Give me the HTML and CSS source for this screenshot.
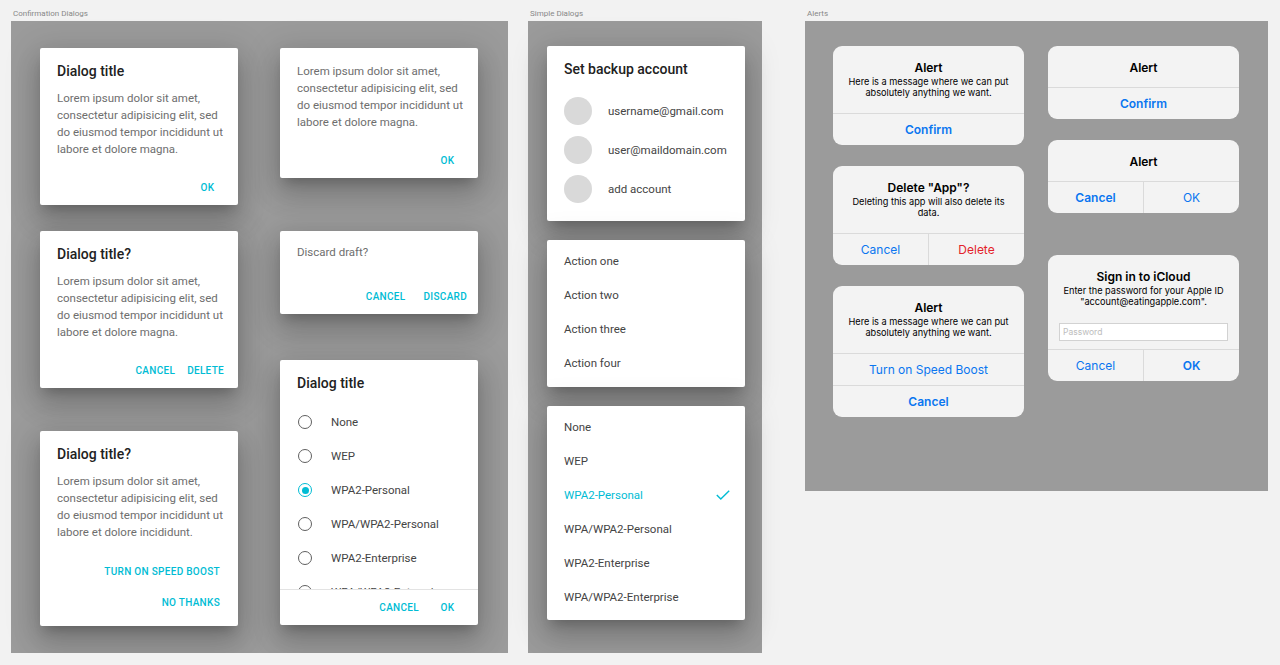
FILE: index.html
```html
<!DOCTYPE html>
<html lang="en">
<head>
<meta charset="UTF-8">
<meta name="viewport" content="width=device-width, initial-scale=1.0">
<title>Dialogs</title>
<link rel="stylesheet" href="styles.css">
</head>
<body>
<div class="board">

    <section class="artboard artboard-confirm">
        <div class="artboard-label">Confirmation Dialogs</div>
        <div class="canvas canvas-confirm">
            <div class="col">
                <div class="md-dialog">
                    <div class="md-title">Dialog title</div>
                    <div class="md-body">Lorem ipsum dolor sit amet, consectetur adipisicing elit, sed do eiusmod tempor incididunt ut labore et dolore magna.</div>
                    <div class="md-actions"><span class="md-btn">OK</span></div>
                </div>
                <div class="md-dialog dlg-delete">
                    <div class="md-title">Dialog title?</div>
                    <div class="md-body">Lorem ipsum dolor sit amet, consectetur adipisicing elit, sed do eiusmod tempor incididunt ut labore et dolore magna.</div>
                    <div class="md-actions"><span class="md-btn">Cancel</span><span class="md-btn">Delete</span></div>
                </div>
                <div class="md-dialog dlg-boost">
                    <div class="md-title">Dialog title?</div>
                    <div class="md-body">Lorem ipsum dolor sit amet, consectetur adipisicing elit, sed do eiusmod tempor incididunt ut labore et dolore incididunt.</div>
                    <div class="md-actions stacked"><span class="md-btn">Turn on speed boost</span><span class="md-btn">No thanks</span></div>
                </div>
            </div>
            <div class="col">
                <div class="md-dialog">
                    <div class="md-body body-only">Lorem ipsum dolor sit amet, consectetur adipisicing elit, sed do eiusmod tempor incididunt ut labore et dolore magna.</div>
                    <div class="md-actions"><span class="md-btn">OK</span></div>
                </div>
                <div class="md-dialog dlg-discard">
                    <div class="md-body body-only">Discard draft?</div>
                    <div class="md-actions"><span class="md-btn">Cancel</span><span class="md-btn">Discard</span></div>
                </div>
                <div class="md-dialog dlg-radio">
                    <div class="md-title">Dialog title</div>
                    <div class="radio-list">
                        <div class="radio-row"><span class="radio"></span>None</div>
                        <div class="radio-row"><span class="radio"></span>WEP</div>
                        <div class="radio-row"><span class="radio on"></span>WPA2-Personal</div>
                        <div class="radio-row"><span class="radio"></span>WPA/WPA2-Personal</div>
                        <div class="radio-row"><span class="radio"></span>WPA2-Enterprise</div>
                        <div class="radio-row"><span class="radio"></span>WPA/WPA2-Enterprise</div>
                    </div>
                    <div class="md-actions"><span class="md-btn">Cancel</span><span class="md-btn">OK</span></div>
                </div>
            </div>
        </div>
    </section>

    <section class="artboard artboard-simple">
        <div class="artboard-label">Simple Dialogs</div>
        <div class="canvas canvas-simple">
            <div class="md-dialog dlg-accounts">
                <div class="md-title">Set backup account</div>
                <div class="account-list">
                    <div class="account-row"><span class="avatar"></span>username@gmail.com</div>
                    <div class="account-row"><span class="avatar"></span>user@maildomain.com</div>
                    <div class="account-row"><span class="avatar"></span>add account</div>
                </div>
            </div>
            <div class="md-dialog menu">
                <div class="menu-item">Action one</div>
                <div class="menu-item">Action two</div>
                <div class="menu-item">Action three</div>
                <div class="menu-item">Action four</div>
            </div>
            <div class="md-dialog menu menu-long">
                <div class="menu-item">None</div>
                <div class="menu-item">WEP</div>
                <div class="menu-item selected">WPA2-Personal
                    <svg class="check" width="14" height="10" viewBox="0 0 14 10"><polyline points="0.8,5 4.8,9 13.2,0.7" fill="none" stroke="#00bcd4" stroke-width="1.4"/></svg>
                </div>
                <div class="menu-item">WPA/WPA2-Personal</div>
                <div class="menu-item">WPA2-Enterprise</div>
                <div class="menu-item">WPA/WPA2-Enterprise</div>
            </div>
        </div>
    </section>

    <section class="artboard artboard-alerts">
        <div class="artboard-label">Alerts</div>
        <div class="canvas canvas-alerts">
            <div class="ios-col">
                <div class="ios-alert">
                    <div class="ios-content">
                        <div class="ios-title">Alert</div>
                        <div class="ios-msg">Here is a message where we can put<br>absolutely anything we want.</div>
                    </div>
                    <div class="ios-btn bold">Confirm</div>
                </div>
                <div class="ios-alert">
                    <div class="ios-content">
                        <div class="ios-title">Delete "App"?</div>
                        <div class="ios-msg">Deleting this app will also delete its<br>data.</div>
                    </div>
                    <div class="ios-btns">
                        <div class="ios-btn">Cancel</div>
                        <div class="ios-btn danger">Delete</div>
                    </div>
                </div>
                <div class="ios-alert">
                    <div class="ios-content">
                        <div class="ios-title">Alert</div>
                        <div class="ios-msg">Here is a message where we can put<br>absolutely anything we want.</div>
                    </div>
                    <div class="ios-btn">Turn on Speed Boost</div>
                    <div class="ios-btn bold">Cancel</div>
                </div>
            </div>
            <div class="ios-col">
                <div class="ios-alert">
                    <div class="ios-content short">
                        <div class="ios-title">Alert</div>
                    </div>
                    <div class="ios-btn bold">Confirm</div>
                </div>
                <div class="ios-alert">
                    <div class="ios-content short">
                        <div class="ios-title">Alert</div>
                    </div>
                    <div class="ios-btns">
                        <div class="ios-btn bold">Cancel</div>
                        <div class="ios-btn">OK</div>
                    </div>
                </div>
                <div class="ios-alert alert-signin">
                    <div class="ios-content signin">
                        <div class="ios-title">Sign in to iCloud</div>
                        <div class="ios-msg">Enter the password for your Apple ID<br>"account@eatingapple.com".</div>
                        <input class="ios-input" type="password" placeholder="Password">
                    </div>
                    <div class="ios-btns">
                        <div class="ios-btn">Cancel</div>
                        <div class="ios-btn bold">OK</div>
                    </div>
                </div>
            </div>
        </div>
    </section>

</div>
</body>
</html>
```

FILE: styles.css
```css
* {
    box-sizing: border-box;
}
body {
    margin: 0;
    background-color: #f2f2f2;
    font-family: Roboto, "Noto Sans", sans-serif;
}
.board {
    display: flex;
    align-items: flex-start;
    padding-left: 11px;
}
.artboard-label {
    height: 21px;
    padding: 9px 0 0 2px;
    font-size: 8px;
    line-height: 10px;
    color: #888;
}
.canvas {
    background-color: #9b9b9b;
}
.artboard-confirm {
    width: 497px;
    margin-right: 20px;
}
.artboard-simple {
    width: 234px;
    margin-right: 43px;
}
.artboard-alerts {
    width: 463px;
}
.canvas-confirm {
    height: 632px;
    display: flex;
    gap: 42px;
    padding: 27px 0 0 29px;
}
.canvas-simple {
    height: 632px;
    display: flex;
    flex-direction: column;
    gap: 19px;
    padding: 25px 0 0 19px;
}
.canvas-alerts {
    height: 470px;
    display: flex;
    gap: 24px;
    padding: 25px 0 0 28px;
}
.col {
    width: 198px;
    display: flex;
    flex-direction: column;
}

/* material dialogs */
.md-dialog {
    width: 198px;
    background-color: #fff;
    border-radius: 2px;
    box-shadow: 0 17px 27px 2px rgba(0, 0, 0, 0.14),
                0 6px 33px 6px rgba(0, 0, 0, 0.12),
                0 8px 11px -5px rgba(0, 0, 0, 0.2);
}
.md-title {
    padding: 13px 17px 0;
    margin-bottom: 9px;
    font-size: 14px;
    line-height: 20px;
    font-weight: 500;
    color: #212121;
}
.md-body {
    padding: 0 12px 0 17px;
    font-size: 11.5px;
    line-height: 17px;
    color: #6e6e6e;
}
.md-body.body-only {
    padding-top: 15px;
}
.md-actions {
    display: flex;
    justify-content: flex-end;
    padding: 17px 8px 4px 0;
}
.md-btn {
    min-width: 45px;
    padding: 0 6px;
    text-align: center;
    font-size: 10px;
    line-height: 26px;
    font-weight: 500;
    letter-spacing: 0.3px;
    text-transform: uppercase;
    color: #00bcd4;
}
.md-actions.stacked {
    flex-direction: column;
    align-items: flex-end;
    gap: 5px;
    padding: 18px 12px 10px 0;
}
.dlg-delete {
    margin-top: 26px;
}
.dlg-boost {
    margin-top: 43px;
}
.dlg-discard {
    margin-top: 53px;
}
.dlg-discard .md-body {
    padding-top: 13px;
}
.dlg-discard .md-actions {
    gap: 6px;
    padding: 23px 5px 4px 0;
}
.dlg-radio {
    margin-top: 46px;
}
.dlg-radio .md-title,
.dlg-accounts .md-title {
    margin-bottom: 0;
}
.dlg-radio .md-actions {
    padding-top: 5px;
}
.radio-list {
    height: 197px;
    overflow: hidden;
    padding-top: 12px;
    border-bottom: 1px solid #e3e3e3;
}
.radio-row {
    display: flex;
    align-items: center;
    gap: 19px;
    height: 34px;
    padding-left: 18px;
    font-size: 11.5px;
    color: #444;
}
.radio {
    flex: none;
    display: grid;
    place-items: center;
    width: 14px;
    height: 14px;
    border: 1.5px solid #5f5f5f;
    border-radius: 50%;
}
.radio.on {
    border-color: #00bcd4;
}
.radio.on::after {
    content: "";
    width: 7px;
    height: 7px;
    border-radius: 50%;
    background-color: #00bcd4;
}

/* simple dialogs */
.account-list {
    padding: 12px 0 13px;
}
.account-row {
    display: flex;
    align-items: center;
    gap: 16px;
    height: 39px;
    padding-left: 17px;
    font-size: 11.5px;
    color: #444;
}
.avatar {
    flex: none;
    width: 28px;
    height: 28px;
    border-radius: 50%;
    background-color: #d9d9d9;
}
.menu {
    padding: 4px 0 7px;
}
.menu-long {
    padding-bottom: 6px;
}
.menu-item {
    display: flex;
    justify-content: space-between;
    align-items: center;
    height: 34px;
    padding: 0 15px 0 17px;
    font-size: 11.5px;
    color: #444;
}
.menu-item.selected {
    color: #00bcd4;
}

/* ios alerts */
.ios-col {
    width: 191px;
    display: flex;
    flex-direction: column;
    gap: 21px;
}
.ios-alert {
    background-color: #f3f3f3;
    border-radius: 9px;
    overflow: hidden;
    text-align: center;
    color: #000;
    font-family: Inter, "Liberation Sans", sans-serif;
}
.alert-signin {
    margin-top: 21px;
}
.ios-content {
    padding: 14px 8px 15px;
}
.ios-content.short {
    padding-bottom: 12px;
}
.ios-content.signin {
    padding: 14px 11px 8px;
}
.ios-title {
    font-size: 12px;
    line-height: 15px;
    font-weight: 600;
}
.ios-msg {
    margin-top: 1px;
    font-size: 9.2px;
    line-height: 11px;
}
.ios-input {
    display: block;
    width: 100%;
    height: 18px;
    margin-top: 16px;
    padding: 0 3px;
    border: 1px solid #d2d2d2;
    background-color: #fff;
    font-family: Inter, "Liberation Sans", sans-serif;
    font-size: 8.5px;
    outline: none;
}
.ios-input::placeholder {
    color: #bdbdbd;
}
.ios-btn {
    height: 32px;
    line-height: 31px;
    border-top: 1px solid #dadada;
    font-size: 12px;
    color: #0a76f0;
}
.ios-btn.bold {
    font-weight: 600;
}
.ios-btn.danger {
    color: #e3222b;
}
.ios-btns {
    display: flex;
    border-top: 1px solid #dadada;
}
.ios-btns .ios-btn {
    flex: 1;
    height: 31px;
    border-top: 0;
}
.ios-btns .ios-btn + .ios-btn {
    border-left: 1px solid #dadada;
}
```
